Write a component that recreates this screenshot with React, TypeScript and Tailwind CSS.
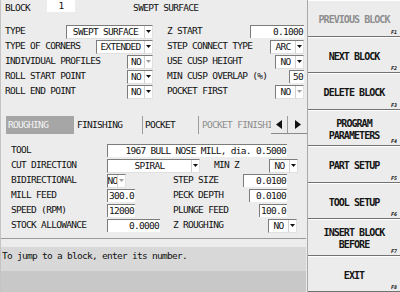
import React from "react";

function Arrow({ disabled }: { disabled?: boolean }) {
  return (
    <div className="w-[8px] h-full flex items-center justify-center border-l border-[#d0d0d0]">
      <svg width="5" height="3" viewBox="0 0 5 3">
        <polygon points="0,0 5,0 2.5,3" fill={disabled ? "#a0a0a0" : "#111111"} />
      </svg>
    </div>
  );
}

function Select({ w, value, disabled }: { w: string; value: string; disabled?: boolean }) {
  return (
    <div className={`${w} h-[14px] flex bg-white border-t border-l border-[#7c7c7c] border-r border-b border-r-[#e0e0e0] border-b-[#e0e0e0]`}>
      <div className="flex-1 flex items-center justify-center whitespace-nowrap overflow-hidden leading-none">{value}</div>
      <Arrow disabled={disabled} />
    </div>
  );
}

function Input({ w, value, center }: { w: string; value: string; center?: boolean }) {
  return (
    <div
      className={`${w} h-[13px] flex items-center ${center ? "justify-center" : "justify-end pr-[1px]"} bg-white border-t border-l border-[#7c7c7c] whitespace-nowrap overflow-hidden leading-none`}
    >
      {value}
    </div>
  );
}

function Row({ children, between }: { children: React.ReactNode; between?: boolean }) {
  return <div className={`h-[15px] flex items-center ${between ? "justify-between" : ""}`}>{children}</div>;
}

function Btn({ label, fk, disabled }: { label: string[]; fk: string; disabled?: boolean }) {
  return (
    <div className="relative flex-1 flex flex-col items-center justify-center pt-[5px] border-b border-[#727272] shadow-[inset_0_1px_0_#ffffff] leading-[12px]">
      {label.map((l) => (
        <div key={l} className={`text-[10px] font-semibold tracking-[-0.95px] ${disabled ? "text-[#8e8e8e]" : "text-[#151515]"}`}>
          {l}
        </div>
      ))}
      <div className="absolute right-[3px] bottom-[1px] text-[5px] leading-none italic font-bold tracking-normal">{fk}</div>
    </div>
  );
}

export default function App() {
  return (
    <div className="w-[400px] h-[292px] flex bg-[#ececec] text-[#111111] overflow-hidden font-['DejaVu_Sans_Mono',monospace] text-[9.5px] tracking-[-0.7px]">
      <div className="w-[307px] flex flex-col border-l border-[#c4c4c4]">
        <div className="h-[14px] flex items-start">
          <span className="ml-[4px] mt-[3px] leading-none">BLOCK</span>
          <div className="ml-[17px] w-[28px] h-[12px] bg-white flex items-center justify-center leading-none">1</div>
          <span className="ml-[58px] mt-[3px] leading-none">SWEPT SURFACE</span>
        </div>

        <div className="mt-[10px] flex">
          <div className="w-[152px] pl-[4px] flex flex-col">
            <Row between>
              <span>TYPE</span>
              <Select w="w-[87px]" value="SWEPT SURFACE" />
            </Row>
            <Row between>
              <span>TYPE OF CORNERS</span>
              <Select w="w-[57px]" value="EXTENDED" />
            </Row>
            <Row between>
              <span>INDIVIDUAL PROFILES</span>
              <Select w="w-[26px]" value="NO" disabled />
            </Row>
            <Row between>
              <span>ROLL START POINT</span>
              <Select w="w-[26px]" value="NO" />
            </Row>
            <Row between>
              <span>ROLL END POINT</span>
              <Select w="w-[26px]" value="NO" />
            </Row>
          </div>
          <div className="ml-[14px] w-[137px] flex flex-col">
            <Row between>
              <span>Z START</span>
              <Input w="w-[54px]" value="0.1000" />
            </Row>
            <Row between>
              <span>STEP CONNECT TYPE</span>
              <Select w="w-[34px]" value="ARC" />
            </Row>
            <Row between>
              <span>USE CUSP HEIGHT</span>
              <Select w="w-[29px]" value="NO" />
            </Row>
            <Row between>
              <span>MIN CUSP OVERLAP (%)</span>
              <Input w="w-[15px]" value="50" />
            </Row>
            <Row between>
              <span>POCKET FIRST</span>
              <Select w="w-[29px]" value="NO" disabled />
            </Row>
          </div>
        </div>

        <div className="mt-[17px] h-[18px] flex items-stretch">
          <div className="ml-[5px] w-[68px] bg-[#a6a6a6] text-[#f4f4f4] pl-[2px] flex items-center">ROUGHING</div>
          <div className="w-[69px] pl-[3px] flex items-center border-r border-[#9a9a9a]">FINISHING</div>
          <div className="w-[56px] pl-[2px] flex items-center border-r border-[#9a9a9a]">POCKET</div>
          <div className="w-[72px] pl-[3px] flex items-center text-[#8e8e8e] whitespace-nowrap overflow-hidden">POCKET FINISHING</div>
          <div className="flex-1 flex border-b border-[#8a8a8a]">
            <div className="w-[17px] flex items-center justify-center border-r border-[#9a9a9a]">
              <svg width="6" height="9" viewBox="0 0 6 9">
                <polygon points="6,0 6,9 0,4.5" fill="#111111" />
              </svg>
            </div>
            <div className="flex-1 flex items-center justify-center">
              <svg width="6" height="9" viewBox="0 0 6 9">
                <polygon points="0,0 0,9 6,4.5" fill="#111111" />
              </svg>
            </div>
          </div>
        </div>

        <div className="h-[105px] w-[305px] pt-[9px] pl-[10px] border-b border-[#9a9a9a] flex flex-col">
          <Row>
            <span className="w-[96px]">TOOL</span>
            <Input w="w-[180px]" value="1967 BULL NOSE MILL, dia. 0.5000" />
          </Row>
          <Row>
            <span className="w-[96px]">CUT DIRECTION</span>
            <Select w="w-[93px]" value="SPIRAL" />
            <span className="ml-[14px] w-[55px]">MIN Z</span>
            <Select w="w-[29px]" value="NO" />
          </Row>
          <Row>
            <span className="w-[96px]">BIDIRECTIONAL</span>
            <Select w="w-[19px]" value="NO" disabled />
            <span className="ml-[47px] w-[70px]">STEP SIZE</span>
            <Input w="w-[44px]" value="0.0100" />
          </Row>
          <Row>
            <span className="w-[96px]">MILL FEED</span>
            <Input w="w-[28px]" value="300.0" />
            <span className="ml-[38px] w-[76px]">PECK DEPTH</span>
            <Input w="w-[38px]" value="0.0100" />
          </Row>
          <Row>
            <span className="w-[96px]">SPEED (RPM)</span>
            <Input w="w-[28px]" value="12000" />
            <span className="ml-[38px] w-[86px]">PLUNGE FEED</span>
            <Input w="w-[28px]" value="100.0" />
          </Row>
          <Row>
            <span className="w-[96px]">STOCK ALLOWANCE</span>
            <Input w="w-[53px]" value="0.0000" />
            <span className="ml-[13px] w-[95px]">Z ROUGHING</span>
            <Select w="w-[29px]" value="NO" />
          </Row>
        </div>

        <div className="mt-[8px] h-[24px] w-[305px] bg-[#d8d8d8] pl-[1px] pt-[3px] leading-[11px] tracking-[-0.72px]">
          To jump to a block, enter its number.
        </div>
        <div className="flex-1 w-[305px] bg-[#c8c8c8]" />
      </div>

      <div className="w-[93px] flex flex-col border-l border-[#a8a8a8]">
        <Btn label={["PREVIOUS BLOCK"]} fk="F1" disabled />
        <Btn label={["NEXT BLOCK"]} fk="F2" />
        <Btn label={["DELETE BLOCK"]} fk="F3" />
        <Btn label={["PROGRAM", "PARAMETERS"]} fk="F4" />
        <Btn label={["PART SETUP"]} fk="F5" />
        <Btn label={["TOOL SETUP"]} fk="F6" />
        <Btn label={["INSERT BLOCK", "BEFORE"]} fk="F7" />
        <Btn label={["EXIT"]} fk="F8" />
      </div>
    </div>
  );
}
